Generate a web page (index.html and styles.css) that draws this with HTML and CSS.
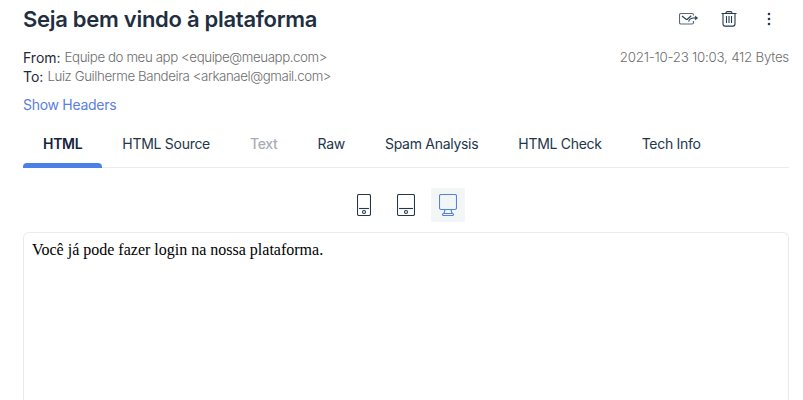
FILE: index.html
```html
<!DOCTYPE html>
<html lang="pt">
<head>
<meta charset="utf-8">
<title>Seja bem vindo à plataforma</title>
<link rel="stylesheet" href="styles.css">
</head>
<body>
<main class="message">
  <header class="message-head">
    <h1 class="subject">Seja bem vindo à plataforma</h1>
    <div class="actions">
      <svg class="icon" width="20" height="16" viewBox="0 0 20 16" fill="none" stroke="#5a6978" stroke-width="1.15">
        <path d="M14.500 4.500V4a1.500 1.500 0 0 0-1.500-1.500H2A1.500 1.500 0 0 0 .5 4v7.500A1.500 1.500 0 0 0 2 13h11a1.500 1.500 0 0 0 1.500-1.500V10" />
        <path stroke="#2b3f54" d="M3 5l4 3.200q.7.5 1.400 0L12.200 4.800M9.600 10.500c.8-2.400 2.400-3.500 5-3.500h3.200"/>
        <path d="M16.200 5l2.600 2-2.600 2z" fill="#2b3f54" stroke="#2b3f54" stroke-width=".4"/>
      </svg>
      <svg class="icon" width="16" height="16" viewBox="0 0 16 16" fill="none" stroke="#233a50" stroke-width="1.1">
        <path d="M.5 2.500h15M5 2.500V2q0-1.400 1.400-1.400h3.200Q11 .6 11 2v.5M2 2.500v10.600q0 2 2 2h8q2 0 2-2V2.500M5.500 5v7M8 5v7M10.500 5v7"/>
      </svg>
      <svg class="icon dots" width="4" height="16" viewBox="0 0 4 16" fill="#233a50">
        <circle cx="2" cy="3" r="1.300"/><circle cx="2" cy="8" r="1.300"/><circle cx="2" cy="13" r="1.300"/>
      </svg>
    </div>
  </header>
  <section class="meta">
    <div class="people">
      <p class="line"><span class="label">From:</span><span>Equipe do meu app &lt;equipe@meuapp.com&gt;</span></p>
      <p class="line"><span class="label">To:</span><span>Luiz Guilherme Bandeira &lt;arkanael@gmail.com&gt;</span></p>
    </div>
    <p class="stamp">2021-10-23 10:03, 412 Bytes</p>
  </section>
  <a class="headers-link">Show Headers</a>
  <nav class="tabs">
    <a class="tab active">HTML</a>
    <a class="tab">HTML Source</a>
    <a class="tab disabled">Text</a>
    <a class="tab">Raw</a>
    <a class="tab">Spam Analysis</a>
    <a class="tab">HTML Check</a>
    <a class="tab">Tech Info</a>
  </nav>
  <div class="devices">
    <svg width="14" height="22" viewBox="0 0 14 22" fill="none" stroke="#25364a" stroke-width="1.100">
      <rect x=".5" y=".5" width="13" height="21" rx="1.500"/><path d="M2 14.500h10"/><circle cx="7" cy="18" r="1.500"/>
    </svg>
    <svg width="18" height="22" viewBox="0 0 18 22" fill="none" stroke="#25364a" stroke-width="1.100">
      <rect x=".5" y=".5" width="17" height="21" rx="1.500"/><path d="M2 14.500h14"/><circle cx="9" cy="18" r="1.500"/>
    </svg>
    <span class="device-selected">
      <svg width="18" height="22" viewBox="0 0 18 22" fill="none" stroke="#5283de" stroke-width="1.100">
        <rect x=".5" y=".5" width="17" height="15" rx="1.500"/><path d="M6 15.500L5 19.500M12 15.500L13 19.500M4.500 19.500h9q1 0 1 1t-1 1h-9q-1 0-1-1t1-1z"/>
      </svg>
    </span>
  </div>
  <article class="preview">Você já pode fazer login na nossa plataforma.</article>
</main>
</body>
</html>
```
FILE: styles.css
```css
* { box-sizing: border-box; }
body {
  margin: 0;
  height: 400px;
  overflow: hidden;
  background: #fff;
  color: #22364b;
  font: 14px/19px Inter, "Liberation Sans", sans-serif;
  letter-spacing: -0.29px;
}
h1, p { margin: 0; }
svg { display: block; flex: none; }
.message {
  width: 766px;
  height: 400px;
  margin-left: 23px;
  display: flex;
  flex-direction: column;
}
.message-head {
  height: 38px;
  display: flex;
  justify-content: space-between;
  align-items: center;
}
.subject {
  font-size: 22px;
  line-height: 28px;
  font-weight: 600;
  letter-spacing: -0.28px;
  color: #1f2f42;
  white-space: nowrap;
}
.actions { display: flex; align-items: center; gap: 22px; padding-right: 18px; }
.dots { margin-left: 8px; }
.meta {
  margin-top: 10px;
  display: flex;
  justify-content: space-between;
  color: #6e6e6e;
  font-size: 13.3px;
  font-weight: 300;
  letter-spacing: -0.41px;
  white-space: nowrap;
}
.line { display: flex; gap: 4px; height: 19px; }
.label {
  font-size: 14px;
  font-weight: 400;
  letter-spacing: 0;
  color: #1f2937;
}
.stamp { letter-spacing: -0.23px; }
.headers-link { margin-top: 9px; height: 19px; color: #5a7fe0; }
.tabs {
  margin-top: 6px;
  height: 48px;
  display: flex;
  border-bottom: 1px solid #ebebed;
  line-height: 48px;
  white-space: nowrap;
}
.tab { position: relative; height: 48px; padding: 0 20px; }
.active { font-weight: 600; color: #14233a; }
.active::after {
  content: "";
  position: absolute;
  left: 0;
  right: 0;
  bottom: 0;
  height: 5px;
  border-radius: 4px 4px 0 0;
  background: #4a80e8;
}
.disabled { font-weight: 500; color: #a7aeb7; }
.devices {
  height: 34px;
  margin-top: 20px;
  display: flex;
  align-items: center;
  justify-content: center;
  gap: 26px;
  padding-left: 9px;
}
.device-selected {
  width: 34px;
  height: 34px;
  margin-left: -10px;
  display: grid;
  place-items: center;
  border-radius: 2px;
  background: #f3f6f7;
}
.preview {
  flex: 1;
  margin-top: 10px;
  padding: 8px;
  border: 1px solid #ebebed;
  border-bottom: 0;
  border-radius: 6px 6px 0 0;
  color: #000;
  font: 16px/18px "Liberation Serif", serif;
  letter-spacing: 0;
}
```
